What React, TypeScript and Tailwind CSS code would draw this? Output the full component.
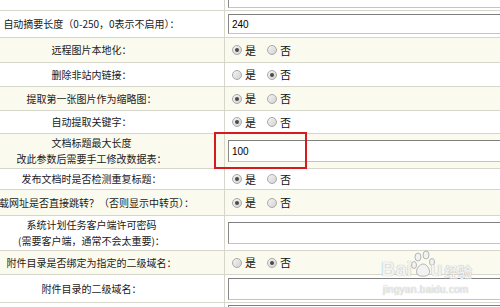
import React from "react";

type Row =
  | { kind: "input"; label: string[]; value?: string; h: number; ih: number }
  | { kind: "radio"; label: string[]; yes: boolean; h: number };

const ROWS: Row[] = [
  { kind: "input", label: ["自动摘要长度（0-250，0表示不启用）："], value: "240", h: 27, ih: 20 },
  { kind: "radio", label: ["远程图片本地化："], yes: true, h: 25 },
  { kind: "radio", label: ["删除非站内链接："], yes: false, h: 24 },
  { kind: "radio", label: ["提取第一张图片作为缩略图："], yes: true, h: 24 },
  { kind: "radio", label: ["自动提取关键字："], yes: true, h: 23 },
  { kind: "input", label: ["文档标题最大长度", "改此参数后需要手工修改数据表："], value: "100", h: 35, ih: 22 },
  { kind: "radio", label: ["发布文档时是否检测重复标题："], yes: true, h: 21 },
  { kind: "radio", label: ["下载网址是否直接跳转？（否则显示中转页）："], yes: true, h: 26 },
  { kind: "input", label: ["系统计划任务客户端许可密码", "(需要客户端，通常不会太重要)："], h: 35, ih: 22 },
  { kind: "radio", label: ["附件目录是否绑定为指定的二级域名："], yes: false, h: 24 },
  { kind: "input", label: ["附件目录的二级域名："], h: 28, ih: 22 },
];

const font = "font-['Noto_Sans_CJK_SC','Noto_Sans_CJK_JP',sans-serif]";

function TextBox({ value, h }: { value?: string; h: number }) {
  return (
    <div
      style={{ height: h }}
      className="w-[300px] shrink-0 flex items-center pl-[3px] bg-white border border-[#c4c4c4] border-t-[#7f7f7f] border-l-[#8a8a8a] text-[10px] text-black font-['Liberation_Sans',sans-serif]"
    >
      {value}
    </div>
  );
}

function Radio({ on, label }: { on: boolean; label: string }) {
  return (
    <span className="flex items-center gap-[3px]">
      <span className="w-[10px] h-[10px] rounded-full border border-[#a9a9a9] bg-gradient-to-br from-[#f4f4f4] to-[#d2d2d2] grid place-items-center">
        {on && <span className="w-[4px] h-[4px] rounded-full bg-[#4a4a4a]" />}
      </span>
      <span className="text-[11px] text-[#111]">{label}</span>
    </span>
  );
}

export default function App() {
  return (
    <div className={`relative w-[500px] h-[307px] overflow-hidden bg-white ${font}`}>
      <div className="-ml-[41px] w-[600px] flex flex-col">
        {/* 上一行的输入框，只露出底边 */}
        <div className="h-[11px] flex border-b border-[#d6d6cb] overflow-hidden bg-white">
          <div className="w-[266px] shrink-0 border-r border-[#d6d6cb]" />
          <div className="flex items-end pl-[3px] pb-[2px]">
            <TextBox h={20} />
          </div>
        </div>

        {ROWS.map((r, i) => (
          <div
            key={i}
            style={{ height: r.h }}
            className={`flex border-b border-[#d6d6cb] ${i % 2 === 1 ? "bg-[#fafbee]" : "bg-white"}`}
          >
            <div className="w-[266px] shrink-0 border-r border-[#d6d6cb] flex flex-col items-center justify-center text-[10px] leading-[16px] text-[#1a1a1a] whitespace-nowrap">
              {r.label.map((l) => (
                <span key={l}>{l}</span>
              ))}
            </div>
            {r.kind === "input" ? (
              <div className="flex items-center pl-[3px]">
                <TextBox value={r.value} h={r.ih} />
              </div>
            ) : (
              <div className="flex items-center pl-[7px] gap-[11px]">
                <Radio on={r.yes} label="是" />
                <Radio on={!r.yes} label="否" />
              </div>
            )}
          </div>
        ))}

        <div className="h-[20px] flex bg-white">
          <div className="w-[266px] shrink-0 border-r border-[#d6d6cb]" />
          <div className="pl-[3px] pt-[2px]">
            <TextBox h={20} />
          </div>
        </div>
      </div>

      {/* 红色标注框 */}
      <div className="absolute left-[214px] top-[132px] w-[93px] h-[37px] border-2 border-[#d51b1f]" />

      {/* 水印 */}
      <div className="absolute left-[381px] top-[250px] flex flex-col items-start pointer-events-none select-none text-[#f2f2f2] [text-shadow:0_0_1px_#9a9a9a]">
        <div className="flex items-end leading-none">
          <span className="text-[20px] font-bold font-['Liberation_Sans',sans-serif]">Bai</span>
          <svg width="26" height="28" viewBox="0 0 26 28" className="mx-[-1px] mb-[1px]">
            <g fill="#f2f2f2" stroke="#a5a5a5" strokeWidth="0.8">
              <ellipse cx="7" cy="7" rx="3" ry="4" />
              <ellipse cx="15" cy="5" rx="3" ry="4" />
              <ellipse cx="3" cy="15" rx="2.5" ry="3.5" />
              <ellipse cx="21" cy="12" rx="2.5" ry="3.5" />
              <path d="M6 24 C4 19 9 14 12 14 C16 14 20 20 18 24 C16 27 8 27 6 24 Z" />
            </g>
          </svg>
          <span className="text-[20px] font-bold font-['Liberation_Sans',sans-serif] -ml-[6px]">u</span>
          <span className="text-[14px] font-bold ml-[2px] mb-[1px]">经验</span>
        </div>
        <span className="text-[10px] font-['Liberation_Sans',sans-serif] mt-[3px] ml-[2px] tracking-[0.3px]">jingyan.baidu.com</span>
      </div>
    </div>
  );
}
